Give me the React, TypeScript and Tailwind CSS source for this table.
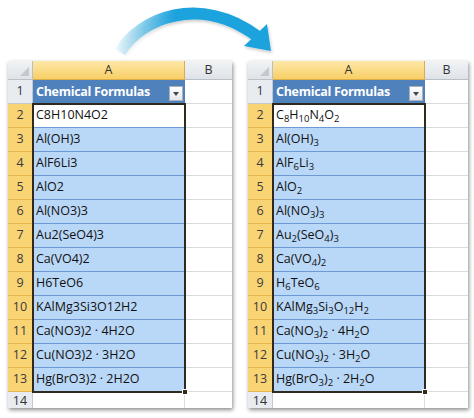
import React from 'react';

const formulas = [
  'C8H10N4O2',
  'Al(OH)3',
  'AlF6Li3',
  'AlO2',
  'Al(NO3)3',
  'Au2(SeO4)3',
  'Ca(VO4)2',
  'H6TeO6',
  'KAlMg3Si3O12H2',
  'Ca(NO3)2 · 4H2O',
  'Cu(NO3)2 · 3H2O',
  'Hg(BrO3)2 · 2H2O',
];

// digits right after a letter or ")" become subscripts, coefficients stay as is
const withSubscripts = (text: string) => {
  const parts = text.split(/(\d+)/);
  return parts.map((p, i) => {
    if (/^\d+$/.test(p) && i > 0 && /[A-Za-z)]$/.test(parts[i - 1])) {
      return (
        <sub key={i} className="text-[9.5px]">
          {p}
        </sub>
      );
    }
    return <React.Fragment key={i}>{p}</React.Fragment>;
  });
};

const Arrow: React.FC = () => (
  <svg width="474" height="61" viewBox="0 0 474 61" className="block">
    <defs>
      <linearGradient id="arrowFade" x1="112" y1="0" x2="175" y2="0" gradientUnits="userSpaceOnUse">
        <stop offset="0" stopColor="#1ba3de" stopOpacity="0" />
        <stop offset="1" stopColor="#1ba3de" stopOpacity="1" />
      </linearGradient>
      <filter id="arrowShadow" x="-10%" y="-20%" width="120%" height="160%">
        <feDropShadow dx="1" dy="2" stdDeviation="1.5" floodColor="#000" floodOpacity="0.2" />
      </filter>
    </defs>
    <g filter="url(#arrowShadow)">
      <path
        d="M120 52 C 140 18, 200 -6, 257 36"
        fill="none"
        stroke="url(#arrowFade)"
        strokeWidth="12"
      />
      <polygon points="244,46 267,24 271,51" fill="#1ba3de" />
    </g>
  </svg>
);

const Sheet: React.FC<{ formatted: boolean; wide: boolean }> = ({ formatted, wide }) => {
  const cols = wide ? 'grid-cols-[25px_152px_47px]' : 'grid-cols-[25px_152px_43px]';

  return (
    <div className="relative bg-white shadow-[1px_2px_4px_rgba(0,0,0,0.45)]">
      <div className={`grid ${cols} grid-rows-[19px_24px_repeat(12,24px)_16px] overflow-hidden`}>
        {/* Column headers */}
        <div className="relative bg-gradient-to-b from-[#f1f3f5] to-[#dfe3e8] border-r border-b border-[#b9c0c8]">
          <div className="absolute right-[3px] bottom-[3px] w-0 h-0 border-l-[9px] border-l-transparent border-b-[9px] border-b-[#c3c8ce]" />
        </div>
        <div className="flex items-center justify-center bg-gradient-to-b from-[#fde7a6] to-[#f8cf64] border-r border-b border-[#d9ae4a] text-[12.5px] text-[#333]">
          A
        </div>
        <div className="flex items-center justify-center bg-gradient-to-b from-[#f1f3f5] to-[#dfe3e8] border-b border-[#b9c0c8] text-[12.5px] text-[#333]">
          B
        </div>

        {/* Row 1: table header */}
        <div className="flex items-end justify-center pb-[2px] bg-[#e8ebef] border-r border-b border-[#c3c9d0] text-[12.5px] text-[#333]">
          1
        </div>
        <div className="relative flex items-end pl-[3px] pb-[2px] bg-[#4f81bd] text-white text-[12.5px] font-bold tracking-[-0.3px]">
          <span>Chemical Formulas</span>
          <div className="absolute right-[2px] bottom-[3px] w-[14px] h-[15px] flex items-center justify-center bg-gradient-to-b from-white to-[#e4e7eb] border border-[#a9b1ba]">
            <div className="w-0 h-0 border-l-[3.5px] border-r-[3.5px] border-t-[4px] border-l-transparent border-r-transparent border-t-[#444]" />
          </div>
        </div>
        <div className="border-b border-[#d8dbdf]" />

        {/* Data rows */}
        {formulas.map((f, i) => (
          <React.Fragment key={f}>
            <div className="flex items-end justify-center pb-[2px] bg-[#f9d475] border-r border-b border-[#e3b650] text-[12.5px] text-[#3a3a3a]">
              {i + 2}
            </div>
            <div
              className={`flex items-end pl-[3px] pb-[2px] whitespace-pre text-[12.5px] text-[#111] border-b border-[#6d9ad4] ${
                i === 0 ? 'bg-white' : 'bg-[#b9d7f7]'
              }`}
            >
              <span>{formatted ? withSubscripts(f) : f}</span>
            </div>
            <div className="border-b border-[#d8dbdf]" />
          </React.Fragment>
        ))}

        {/* Row 14 (cut off) */}
        <div className="flex items-start justify-center pt-[1px] bg-[#e8ebef] border-r border-[#c3c9d0] text-[12.5px] text-[#333] leading-[15px]">
          14
        </div>
        <div className="bg-white border-r border-[#d8dbdf]" />
        <div className="bg-white" />
      </div>

      {/* Selection outline over A2:A13 */}
      <div className="absolute left-[24px] top-[42px] w-[154px] h-[290px] border-2 border-[#2f2a1d] pointer-events-none">
        <div className="absolute -right-[4px] -bottom-[4px] w-[6px] h-[6px] bg-[#2f2a1d] border border-white" />
      </div>
    </div>
  );
};

const App: React.FC = () => {
  return (
    <div className="w-[474px] h-[418px] bg-white overflow-hidden [font-family:'Open_Sans',sans-serif]">
      <Arrow />
      <div className="flex items-start pl-[8px] gap-[16px]">
        <Sheet formatted={false} wide />
        <Sheet formatted wide={false} />
      </div>
    </div>
  );
};

export default App;
